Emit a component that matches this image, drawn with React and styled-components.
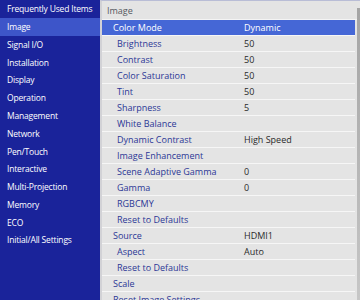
import React from "react";
import styled, { createGlobalStyle } from "styled-components";

const Global = createGlobalStyle`
  html, body { margin: 0; padding: 0; background: #e4e4e4; }
  body { font-family: "Open Sans", "Noto Sans", sans-serif; }
`;

const Screen = styled.div`
  width: 360px;
  height: 300px;
  display: flex;
  overflow: hidden;
  background: #e4e4e4;
`;

const Sidebar = styled.nav`
  width: 100px;
  flex: none;
  background: #1a239a;
  display: flex;
  flex-direction: column;
`;

const SideItem = styled.div`
  height: 17.77px;
  flex: none;
  display: flex;
  align-items: center;
  padding-left: 7px;
  font-size: 8.5px;
  letter-spacing: -0.18px;
  color: #ffffff;
  white-space: nowrap;
  background: ${(p) => (p.$active ? "#3d55c9" : "transparent")};
`;

const Panel = styled.section`
  flex: 1;
  display: flex;
  border-left: 2px solid #d2d2d6;
  border-top: 1px solid #b9bdd6;
  min-width: 0;
`;

const List = styled.div`
  flex: 1;
  display: flex;
  flex-direction: column;
  min-width: 0;
`;

const Header = styled.div`
  height: 18px;
  flex: none;
  display: flex;
  align-items: center;
  padding-left: 5px;
  font-size: 9px;
  color: #555860;
  border-bottom: 1px solid #f4f4f4;
`;

const Row = styled.div`
  height: 15px;
  flex: none;
  display: grid;
  grid-template-columns: 142px 1fr;
  align-items: center;
  margin-right: 2px;
  font-size: 9px;
  border-bottom: 1px solid #f6f6f6;
  background: ${(p) => (p.$selected ? "#4567d6" : "#e4e4e4")};
`;

const Label = styled.span`
  padding-left: ${(p) => (p.$sub ? 15 : 11)}px;
  color: ${(p) => (p.$selected ? "#ffffff" : "#2b3796")};
  white-space: nowrap;
`;

const Value = styled.span`
  color: ${(p) => (p.$selected ? "#ffffff" : "#2a2a2a")};
  white-space: nowrap;
`;

const Scrollbar = styled.div`
  width: 3px;
  flex: none;
  padding-top: 7px;
  display: flex;
  flex-direction: column;
`;

const Thumb = styled.div`
  flex: 1;
  background: linear-gradient(#a4a4a4, #c6c6c6);
`;

const sideItems = [
  "Frequently Used Items",
  "Image",
  "Signal I/O",
  "Installation",
  "Display",
  "Operation",
  "Management",
  "Network",
  "Pen/Touch",
  "Interactive",
  "Multi-Projection",
  "Memory",
  "ECO",
  "Initial/All Settings",
];

const rows = [
  { label: "Color Mode", value: "Dynamic", selected: true },
  { label: "Brightness", value: "50", sub: true },
  { label: "Contrast", value: "50", sub: true },
  { label: "Color Saturation", value: "50", sub: true },
  { label: "Tint", value: "50", sub: true },
  { label: "Sharpness", value: "5", sub: true },
  { label: "White Balance", value: "", sub: true },
  { label: "Dynamic Contrast", value: "High Speed", sub: true },
  { label: "Image Enhancement", value: "", sub: true },
  { label: "Scene Adaptive Gamma", value: "0", sub: true },
  { label: "Gamma", value: "0", sub: true },
  { label: "RGBCMY", value: "", sub: true },
  { label: "Reset to Defaults", value: "", sub: true },
  { label: "Source", value: "HDMI1" },
  { label: "Aspect", value: "Auto", sub: true },
  { label: "Reset to Defaults", value: "", sub: true },
  { label: "Scale", value: "" },
  { label: "Reset Image Settings", value: "" },
];

export default function App() {
  return (
    <Screen>
      <Global />
      <Sidebar>
        {sideItems.map((t) => (
          <SideItem key={t} $active={t === "Image"}>
            {t}
          </SideItem>
        ))}
      </Sidebar>
      <Panel>
        <List>
          <Header>Image</Header>
          {rows.map((r, i) => (
            <Row key={i} $selected={r.selected}>
              <Label $sub={r.sub} $selected={r.selected}>
                {r.label}
              </Label>
              <Value $selected={r.selected}>{r.value}</Value>
            </Row>
          ))}
        </List>
        <Scrollbar>
          <Thumb />
        </Scrollbar>
      </Panel>
    </Screen>
  );
}
